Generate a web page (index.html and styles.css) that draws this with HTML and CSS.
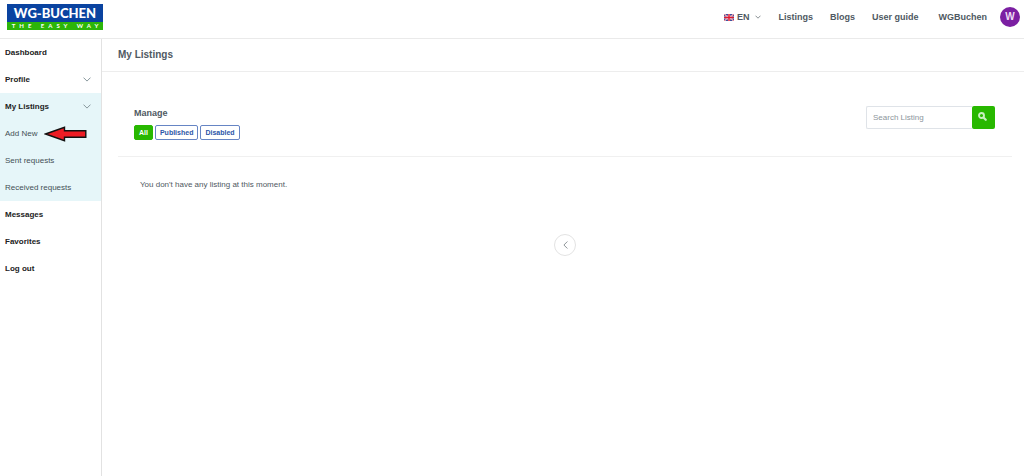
FILE: index.html
```html
<!DOCTYPE html>
<html lang="en">
<head>
  <meta charset="utf-8">
  <title>My Listings</title>
  <link rel="stylesheet" href="styles.css">
</head>
<body>
  <header class="header">
    <a class="logo" href="#">
      <span class="logo-name">WG-BUCHEN</span>
      <span class="logo-tagline">THE EASY WAY</span>
    </a>
    <nav class="nav">
      <button class="lang" type="button">
        <svg width="10" height="7" viewBox="0 0 20 14">
          <rect width="20" height="14" fill="#2b3c92"/>
          <path d="M0 0L20 14M20 0L0 14" stroke="#fff" stroke-width="2.6"/>
          <path d="M0 0L20 14M20 0L0 14" stroke="#d8233b" stroke-width="1.2"/>
          <path d="M10 0V14M0 7H20" stroke="#fff" stroke-width="4.4"/>
          <path d="M10 0V14M0 7H20" stroke="#e0182f" stroke-width="3"/>
        </svg>
        EN
        <svg class="lang-arrow" width="6" height="4" viewBox="0 0 6 4" fill="none" stroke="#8a9094">
          <path d="M0.5 0.7L3 3.2L5.5 0.7"/>
        </svg>
      </button>
      <a href="#">Listings</a>
      <a href="#">Blogs</a>
      <a href="#">User guide</a>
      <a class="user" href="#">WGBuchen <span class="avatar">W</span></a>
    </nav>
  </header>

  <div class="layout">
    <aside class="sidebar">
      <ul class="menu">
        <li><a href="#">Dashboard</a></li>
        <li>
          <a href="#">Profile
            <svg width="8" height="5" viewBox="0 0 8 5" fill="none" stroke="#87979c"><path d="M0.5 0.6L4 4.1L7.5 0.6"/></svg>
          </a>
        </li>
        <li class="active">
          <a href="#">My Listings
            <svg width="8" height="5" viewBox="0 0 8 5" fill="none" stroke="#87979c"><path d="M0.5 0.6L4 4.1L7.5 0.6"/></svg>
          </a>
          <ul class="submenu">
            <li>
              <a href="#">Add New
                <svg class="pointer" width="43" height="16" viewBox="0 0 43 16">
                  <path d="M1.5 8L20.5 1.3V4.8H41.8V11.2H20.5V14.7Z" fill="#ed1c24" stroke="#111" stroke-width="1.4"/>
                </svg>
              </a>
            </li>
            <li><a href="#">Sent requests</a></li>
            <li><a href="#">Received requests</a></li>
          </ul>
        </li>
        <li><a href="#">Messages</a></li>
        <li><a href="#">Favorites</a></li>
        <li><a href="#">Log out</a></li>
      </ul>
    </aside>

    <main class="main">
      <h1>My Listings</h1>
      <section class="panel">
        <div class="manage">
          <div>
            <h2>Manage</h2>
            <div class="filters">
              <button class="filter selected" type="button">All</button>
              <button class="filter" type="button">Published</button>
              <button class="filter" type="button">Disabled</button>
            </div>
          </div>
          <form class="search">
            <input type="text" placeholder="Search Listing" aria-label="Search Listing">
            <button type="button" aria-label="Search">
              <svg width="9" height="9" viewBox="0 0 18 18" fill="none" stroke="#c9f0bf">
                <circle cx="7" cy="7" r="5" stroke-width="3.8"/>
                <path d="M11 11L15.5 15.5" stroke-width="4.4" stroke-linecap="round"/>
              </svg>
            </button>
          </form>
        </div>
        <p class="empty">You don't have any listing at this moment.</p>
        <div class="pagination">
          <button class="prev" type="button" aria-label="Previous page">
            <svg width="5" height="8" viewBox="0 0 5 8" fill="none" stroke="#8f9599"><path d="M4.4 0.5L0.9 4L4.4 7.5"/></svg>
          </button>
        </div>
      </section>
    </main>
  </div>
</body>
</html>
```
FILE: styles.css
```css
* {
  box-sizing: border-box;
}

body {
  margin: 0;
  min-height: 100vh;
  display: flex;
  flex-direction: column;
  font-family: "Liberation Sans", Arial, sans-serif;
  font-size: 8px;
  color: #4f5962;
  background: #fff;
}

a {
  color: inherit;
  text-decoration: none;
}

button,
input {
  font: inherit;
  color: inherit;
}

button {
  cursor: pointer;
}

.header {
  display: flex;
  align-items: center;
  justify-content: space-between;
  height: 39px;
  padding: 0 4px 4px 7px;
  border-bottom: 1px solid #eaeaea;
}

.logo {
  width: 96px;
  background: #0a43a0;
  color: #fff;
  font-family: Lato, sans-serif;
  font-weight: 900;
  text-align: center;
}

.logo-name {
  display: block;
  height: 18px;
  font-size: 13px;
  line-height: 19px;
}

.logo-tagline {
  display: block;
  height: 8px;
  padding-left: 4px;
  font-size: 6px;
  font-weight: 700;
  line-height: 8px;
  letter-spacing: 4px;
  white-space: nowrap;
  background: #2cb509;
}

.nav {
  display: flex;
  align-items: center;
  gap: 17px;
  font-size: 9px;
  font-weight: 700;
}

.lang {
  display: flex;
  align-items: center;
  gap: 3px;
  padding: 0;
  border: 0;
  background: none;
}

.lang-arrow {
  margin-left: 3px;
}

.user {
  display: flex;
  align-items: center;
  gap: 13px;
  margin-left: 3px;
}

.avatar {
  width: 20px;
  height: 20px;
  border-radius: 50%;
  background: #7b1fa2;
  color: #eddcf3;
  font-size: 10px;
  line-height: 20px;
  text-align: center;
}

.layout {
  flex: 1;
  display: flex;
}

.sidebar {
  width: 102px;
  border-right: 1px solid #e2e2e2;
}

.menu,
.submenu {
  margin: 0;
  padding: 0;
  list-style: none;
}

.menu a {
  display: flex;
  align-items: center;
  justify-content: space-between;
  height: 27px;
  padding: 0 10px 0 5px;
  font-weight: 700;
  color: #222;
}

.active {
  background: #e6f6f9;
}

.menu .submenu a {
  justify-content: flex-start;
  gap: 7px;
  padding-right: 0;
  font-weight: 400;
  color: #445055;
}

.pointer {
  flex: none;
}

.main {
  flex: 1;
}

h1 {
  margin: 0;
  padding: 0 16px;
  border-bottom: 1px solid #ededed;
  font-size: 10px;
  line-height: 32px;
}

.panel {
  padding: 34px 12px 0 16px;
}

.manage {
  display: flex;
  justify-content: space-between;
  height: 51px;
  padding: 0 17px 0 16px;
  border-bottom: 1px solid #f0f0f0;
}

h2 {
  margin: 0 0 5px;
  font-size: 9px;
  line-height: 14px;
}

.filters {
  display: flex;
  gap: 2px;
}

.filter {
  height: 15px;
  padding: 0 4px;
  border: 1px solid #6685c4;
  border-radius: 2px;
  background: #fff;
  color: #2c56a8;
  font-size: 7px;
  font-weight: 700;
}

.filter.selected {
  border-color: #28b800;
  background: #28b800;
  color: #fff;
}

.search {
  display: flex;
  height: 23px;
}

.search input {
  width: 106px;
  padding: 0 6px;
  border: 1px solid #dfe3e8;
  border-right: 0;
  border-radius: 2px 0 0 2px;
}

.search input::placeholder {
  color: #8c959c;
}

.search button {
  display: flex;
  align-items: center;
  justify-content: center;
  width: 23px;
  padding: 0 3px 2px 0;
  border: 0;
  border-radius: 2px;
  background: #28b800;
}

.empty {
  margin: 0;
  padding: 22px;
  line-height: 12px;
}

.pagination {
  display: flex;
  justify-content: center;
  padding-top: 21px;
}

.prev {
  display: flex;
  align-items: center;
  justify-content: center;
  width: 22px;
  height: 22px;
  padding: 0;
  border: 1px solid #e3e3e3;
  border-radius: 50%;
  background: #fff;
}
```
